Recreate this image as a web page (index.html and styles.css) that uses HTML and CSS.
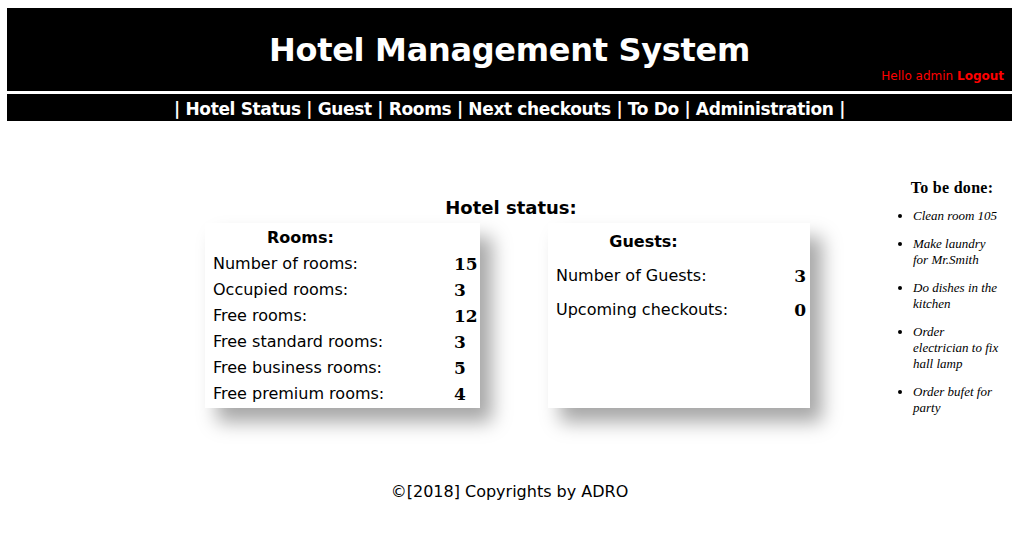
FILE: index.html
```html
<!DOCTYPE html>
<html>
<head>
<meta charset="utf-8">
<link rel="stylesheet" href="styles.css">
</head>
<body>
<header class="top">
  <h1 class="title">Hotel Management System</h1>
  <div class="user">Hello admin <b>Logout</b></div>
</header>
<nav class="nav">| Hotel Status | Guest | Rooms | Next checkouts | To Do | Administration |</nav>
<div class="main">
  <section class="status">
    <h2 class="status-title">Hotel status:</h2>
    <div class="boxes">
      <div class="box rooms">
        <div class="box-head">Rooms:</div>
        <div class="row"><span>Number of rooms:</span><b>15</b></div>
        <div class="row"><span>Occupied rooms:</span><b>3</b></div>
        <div class="row"><span>Free rooms:</span><b>12</b></div>
        <div class="row"><span>Free standard rooms:</span><b>3</b></div>
        <div class="row"><span>Free business rooms:</span><b>5</b></div>
        <div class="row"><span>Free premium rooms:</span><b>4</b></div>
      </div>
      <div class="box guests">
        <div class="box-head">Guests:</div>
        <div class="row"><span>Number of Guests:</span><b>3</b></div>
        <div class="row"><span>Upcoming checkouts:</span><b>0</b></div>
      </div>
    </div>
  </section>
  <aside class="todo">
    <h3 class="todo-title">To be done:</h3>
    <ul class="todo-list">
      <li>Clean room 105</li>
      <li>Make laundry<br>for Mr.Smith</li>
      <li>Do dishes in the<br>kitchen</li>
      <li>Order<br>electrician to fix<br>hall lamp</li>
      <li>Order bufet for<br>party</li>
    </ul>
  </aside>
</div>
<footer class="foot">©[2018] Copyrights by ADRO</footer>
</body>
</html>
```
FILE: styles.css
```css
body {
  margin: 8px 7px;
  font-family: "DejaVu Sans", Verdana, sans-serif;
  color: #000;
  background: #fff;
}
.top {
  background: #000;
  height: 83px;
  display: flex;
  flex-direction: column;
  align-items: center;
}
.title {
  margin: 24px 0 0;
  color: #fff;
  font-size: 32px;
  line-height: 36px;
  font-weight: bold;
  letter-spacing: -0.3px;
}
.user {
  align-self: flex-end;
  margin-right: 8px;
  color: #f00;
  font-size: 12px;
  line-height: 16px;
}
.nav {
  margin-top: 3px;
  background: #000;
  color: #fff;
  height: 25px;
  padding-top: 2px;
  line-height: 27px;
  font-size: 17px;
  font-weight: bold;
  text-align: center;
  letter-spacing: -0.35px;
}
.main {
  display: flex;
  margin-top: 52px;
  height: 309px;
}
.status {
  flex: 1;
  padding-left: 198px;
  padding-top: 24px;
}
.status-title {
  margin: 0;
  text-align: center;
  font-size: 18px;
  line-height: 22px;
  width: 612px;
}
.boxes {
  display: flex;
  gap: 68px;
  margin-top: 4px;
}
.box {
  background: #fff;
  box-shadow: 12px 14px 18px rgba(0,0,0,0.35);
  height: 185px;
  font-size: 16px;
}
.rooms {
  width: 275px;
  padding-left: 8px;
  padding-top: 2px;
  box-sizing: border-box;
}
.guests {
  width: 262px;
  padding-left: 8px;
  padding-right: 4px;
  padding-top: 6px;
  box-sizing: border-box;
}
.box-head {
  font-weight: bold;
  text-align: center;
  width: 175px;
  line-height: 26px;
}
.guests .box-head { margin-bottom: 4px; }
.row {
  display: flex;
  justify-content: space-between;
  align-items: center;
}
.rooms .row { height: 26px; line-height: 26px; padding-right: 2px; }
.guests .row { height: 34px; line-height: 34px; }
.row b {
  font-family: "DejaVu Serif", Georgia, serif;
  font-size: 17px;
  line-height: 20px;
}
.rooms .row b { width: 24px; }
.todo {
  width: 129px;
  padding-top: 6px;
  font-family: "Liberation Serif", Georgia, serif;
}
.todo-title {
  margin: 0;
  padding-left: 9px;
  text-align: center;
  font-size: 16px;
  line-height: 18px;
  letter-spacing: 0.3px;
}
.todo-list {
  margin: 11px 0 0;
  padding-left: 30px;
  font-style: italic;
  font-size: 13px;
  line-height: 16px;
}
.todo-list li { margin-bottom: 12px; }
.foot {
  text-align: center;
  font-size: 16px;
  line-height: 20px;
}
```
